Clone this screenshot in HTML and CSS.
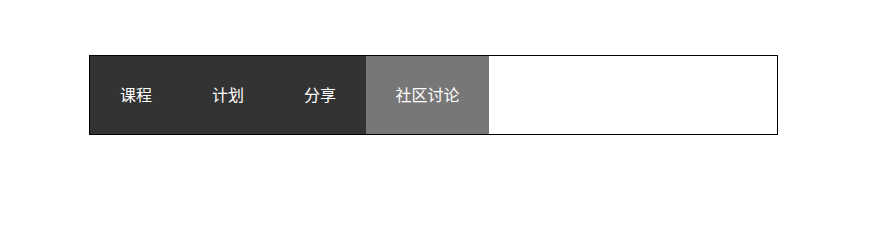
FILE: index.html
```html
<!DOCTYPE html>
<html lang="zh">
<head>
<meta charset="utf-8">
<link rel="stylesheet" href="styles.css">
</head>
<body>
<nav class="nav">
  <a class="item">课程</a>
  <a class="item">计划</a>
  <a class="item">分享</a>
  <a class="item active">社区讨论</a>
</nav>
</body>
</html>
```
FILE: styles.css
```css
html, body {
  margin: 0;
  padding: 0;
  background: #fff;
}
body {
  padding: 55px 0 0 89px;
}
.nav {
  display: flex;
  width: 687px;
  height: 78px;
  border: 1px solid #000;
  font-family: "Noto Sans CJK SC", "DejaVu Sans", sans-serif;
  font-size: 16px;
}
.item {
  display: block;
  box-sizing: border-box;
  width: 92px;
  padding-bottom: 2px;
  line-height: 76px;
  text-align: center;
  color: #fff;
  background: #333;
}
.item.active {
  width: 123px;
  background: #777;
}
```
